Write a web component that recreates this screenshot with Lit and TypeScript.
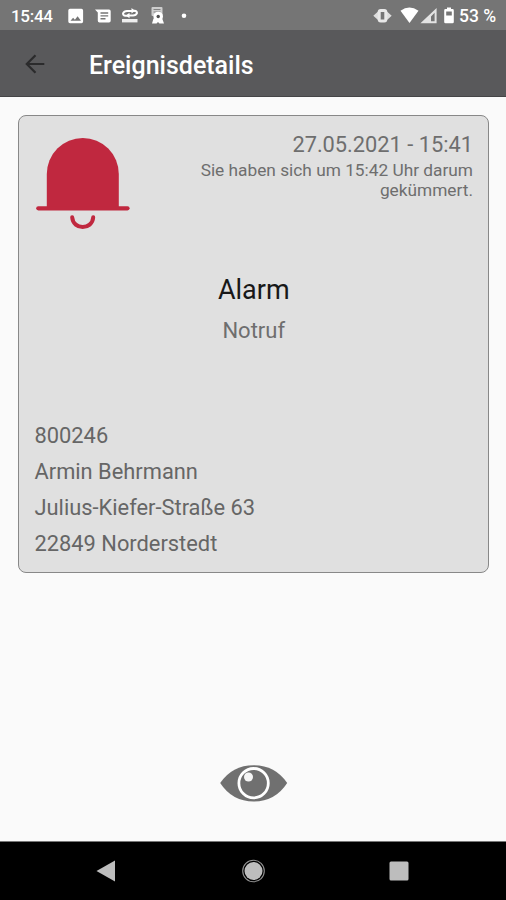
import { LitElement, html, css } from "lit";
import { customElement } from "lit/decorators.js";

@customElement("status-bar")
class StatusBar extends LitElement {
  static styles = css`
    :host { display: flex; height: 30px; box-sizing: border-box; padding: 1px 9px 0 11px; align-items: center; justify-content: space-between; background: #757575; color: #fff; font: 500 17px/30px Roboto, sans-serif; }
    .group { display: flex; align-items: center; }
    .time { width: 57px; letter-spacing: -0.3px; }
    .battery { width: 38px; font-size: 17.500px; white-space: nowrap; }
    svg { display: block; flex: none; }
  `;
  render() {
    return html`
      <div class="group">
        <span class="time">15:44</span>
        <svg width="122" height="20" viewBox="68 5.500 122 20" fill="#fff">
          <path fill-rule="evenodd" d="M70 8.300h11.400q1.700 0 1.700 1.700v11q0 1.700-1.700 1.700H70q-1.700 0-1.700-1.700V10q0-1.700 1.700-1.700zM70.500 20.300h10.500l-3.400-4.500-2.700 3.400-1.800-2z"/>
          <path fill-rule="evenodd" d="M95 9h14q1.700 0 1.700 1.700v9.500q0 1.700-1.700 1.700H99.500q-1.700 0-1.700-1.700V12zM100.500 11.800v1.400h7.700v-1.400zM100.500 14.700v1.400h7.700v-1.400zM100.500 17.600v1.400h5v-1.400z"/>
          <g fill="none" stroke="#fff" stroke-width="1.900" stroke-linecap="round">
            <path d="M127.500 15.200h-2q-2.500-.3-2.500-2.300 1-2.400 4-2.400h7"/>
            <path d="M132.500 10.300h2q2.500.3 2.500 2.300-1 2.400-4 2.400h-5"/>
          </g>
          <path d="M131.500 7.500 135 10.300l-3.500 2.700zM129.500 12.300 126 15.100l3.500 2.700z"/>
          <path d="M122 18.500h15.500v3.400H122z" opacity=".88"/>
          <g opacity=".9"><rect x="151.500" y="6.500" width="11" height="9" rx="1" fill="#d8d8d8"/><path d="M153.500 9h7M153.500 11.500h7" stroke="#858585" stroke-width="1.200"/></g>
          <path d="m153.500 18-1.500 5h4.500l1.500-1.500 1.500 1.500h4.500l-1.800-5z"/>
          <circle cx="158.200" cy="16" r="4.800"/><circle cx="158.200" cy="16" r="1.700" fill="#505050"/>
          <circle cx="184" cy="15.200" r="2.300"/>
        </svg>
      </div>
      <div class="group">
        <svg width="87" height="20" viewBox="372 5.500 87 20">
          <path d="m373.300 15.200 5-4.500v9zM391.700 15.200l-5-4.500v9z" fill="#ddd"/>
          <rect x="379.200" y="10" width="6.600" height="10.400" rx="1.500" fill="#757575" stroke="#e8e8e8" stroke-width="3"/>
          <path d="M400.500 10.200q8.900-6.400 18 0L409.500 22.600z" fill="#fff"/>
          <path fill-rule="evenodd" d="M436.600 7.500v15.300h-16.200zM434.600 12.300v8.500h-3.600v-4.800z" fill="#e3e3e3"/>
          <path fill-rule="evenodd" d="M447 7h4v1.600h1.500q1.300 0 1.300 1.300v11.500q0 1.300-1.300 1.300h-7q-1.300 0-1.300-1.300V9.900q0-1.300 1.300-1.300h1.500zM446.200 11v4h5.600V11z" fill="#fff"/>
        </svg>
        <span class="battery">53 %</span>
      </div>`;
  }
}

@customElement("title-bar")
class TitleBar extends LitElement {
  static styles = css`
    :host { display: flex; height: 67px; box-sizing: border-box; align-items: center; gap: 44px; padding: 2px 25px 0; background: #59595b; border-bottom: 1px solid #454547; color: #fff; font-family: Roboto, sans-serif; }
    h1 { margin: 3px 0 0; font-size: 25px; font-weight: 500; line-height: 32px; }
    svg { display: block; }
  `;
  render() {
    return html`
      <svg width="20" height="20" viewBox="0 0 20 20" fill="none" stroke="#2b2b2c" stroke-width="2.200"><path d="M19.300 10H2M10.500 1.300 1.800 10l8.700 8.700"/></svg>
      <h1>Ereignisdetails</h1>`;
  }
}

@customElement("event-card")
class EventCard extends LitElement {
  static styles = css`
    :host { display: flex; flex-direction: column; box-sizing: border-box; height: 458px; padding: 15px 15px 10px 15.500px; background: #e0e0e0; border: 1.500px solid #888; border-radius: 8px; color: #6e6e6e; font-family: Roboto, sans-serif; }
    .top { display: flex; justify-content: space-between; height: 141px; }
    .bell { display: block; margin: 6px 0 0 1.500px; flex: none; }
    .when { text-align: right; width: 290px; }
    .date { font-size: 21.800px; line-height: 28px; }
    .note { font-size: 17.300px; line-height: 20px; margin-top: 1px; }
    .center { text-align: center; }
    .kind { color: #181818; font-size: 27px; line-height: 36px; }
    .detail { font-size: 22px; line-height: 28px; margin-top: 9px; }
    .address { margin-top: auto; font-size: 21.850px; line-height: 36px; color: #666; }
  `;
  render() {
    return html`
      <div class="top">
        <svg class="bell" width="94" height="94" viewBox="36.500 137 94 94">
          <path d="M47.300 208V174a36 36 0 0 1 72 0v34z" fill="#c0283f"/>
          <path d="M38.800 208.300h89.200" stroke="#c0283f" stroke-width="4.200" stroke-linecap="round"/>
          <path d="M73 217.300c1 13 20 13 21 0" transform="translate(-.300 0)" fill="none" stroke="#c0283f" stroke-width="4" stroke-linecap="round"/>
        </svg>
        <div class="when">
          <div class="date">27.05.2021 - 15:41</div>
          <div class="note">Sie haben sich um 15:42 Uhr darum gekümmert.</div>
        </div>
      </div>
      <div class="center">
        <div class="kind">Alarm</div>
        <div class="detail">Notruf</div>
      </div>
      <div class="address">
        <div>800246</div>
        <div>Armin Behrmann</div>
        <div>Julius-Kiefer-Straße 63</div>
        <div>22849 Norderstedt</div>
      </div>`;
  }
}

@customElement("nav-bar")
class NavBar extends LitElement {
  static styles = css`
    :host { display: grid; grid-template-columns: 24px 24px 24px; justify-content: center; column-gap: 122px; align-items: center; height: 59px; box-sizing: border-box; background: #000; border-top: 1px solid #777; padding: 0 1px 0 0; }
    svg { display: block; }
  `;
  render() {
    return html`
      <svg width="24" height="24" viewBox="0 0 24 24"><path d="M20 1.500v21L1.500 12z" fill="#bdbdbd"/></svg>
      <svg width="24" height="24" viewBox="0 0 24 24"><circle cx="12.500" cy="12" r="9" fill="#bdbdbd"/><circle cx="12.500" cy="12" r="10.800" fill="none" stroke="#929292" stroke-width="1.100"/></svg>
      <svg width="24" height="24" viewBox="0 0 24 24"><rect x="2.500" y="2.500" width="19" height="19" rx="1.500" fill="#bdbdbd"/></svg>`;
  }
}

@customElement("app-root")
class AppRoot extends LitElement {
  static styles = css`
    :host { display: flex; flex-direction: column; height: 900px; background: #fafafa; overflow: hidden; }
    main { flex: 1; display: flex; flex-direction: column; padding: 18px 17px 38px 18px; }
    .eye { display: block; margin: auto auto 0; }
  `;
  render() {
    return html`
      <status-bar></status-bar>
      <title-bar></title-bar>
      <main>
        <event-card></event-card>
        <svg class="eye" width="68" height="40" viewBox="219.800 763 68 40">
          <path d="M220 783q12-17.800 33.500-17.800T287 783q-12 18.500-33.500 18.500T220 783z" fill="#707070"/>
          <circle cx="253.400" cy="783.200" r="14.700" fill="none" stroke="#fff" stroke-width="2.800"/>
          <circle cx="248.300" cy="777" r="4.500" fill="#f6f6f6"/>
        </svg>
      </main>
      <nav-bar></nav-bar>`;
  }
}
